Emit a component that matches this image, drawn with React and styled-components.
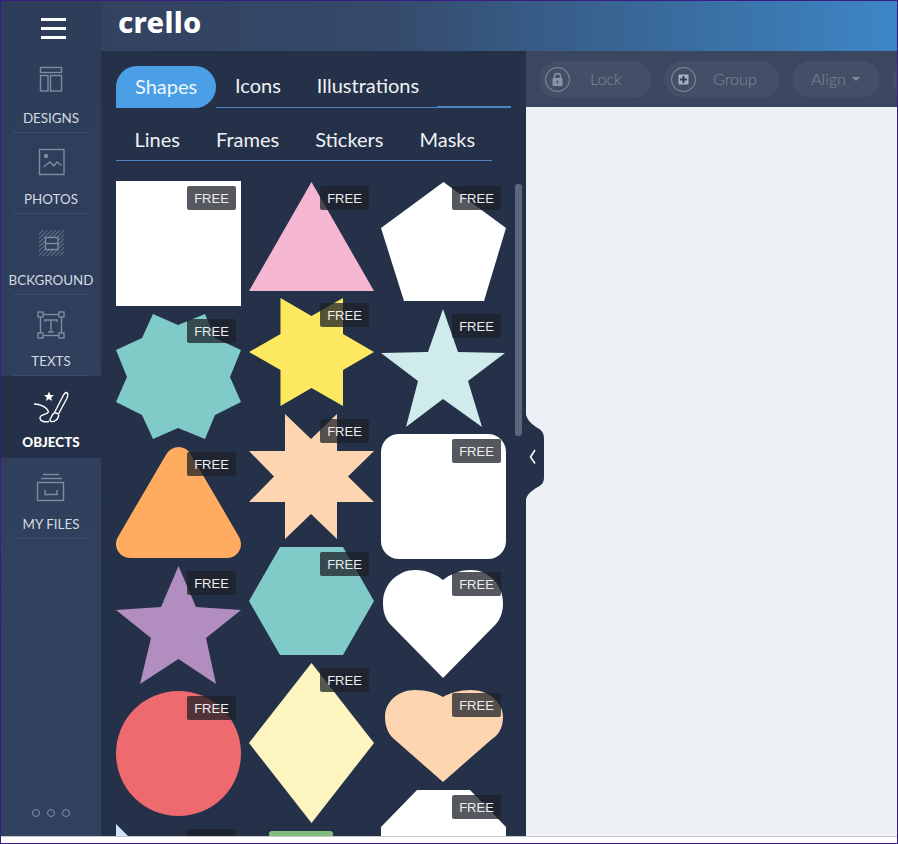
import React from "react";
import styled, { createGlobalStyle } from "styled-components";

const Global = createGlobalStyle`
  html, body { margin: 0; padding: 0; background: #fff; }
  body { font-family: "Lato", "Open Sans", sans-serif; }
`;

const Frame = styled.div`
  width: 898px; height: 844px; box-sizing: border-box; overflow: hidden;
  background: #fff;
  border: 1px solid #3a1c84;
  display: flex; flex-direction: column;
`;
const Main = styled.div`
  flex: none; height: 835px; display: flex;
  border-bottom: 1px solid #c6c8cc; box-sizing: content-box; overflow: hidden;
`;
const Sidebar = styled.nav`
  flex: none; width: 100px; display: flex; flex-direction: column;
  background: linear-gradient(180deg, #2e3d59 0%, #31425f 100%);
`;
const MenuButton = styled.div`
  flex: none; height: 51px; box-sizing: border-box; padding-top: 17px;
  display: flex; flex-direction: column; align-items: center; gap: 6.5px;
`;
const MenuBar = styled.span`
  display: block; width: 25px; height: 2.5px; background: #fff; margin-left: 5px;
`;
const Item = styled.div`
  flex: none; height: ${p => (p.$active ? 82 : 81)}px; box-sizing: border-box; padding: 0 12px;
  background: ${p => (p.$active ? "#253149" : "transparent")};
`;
const ItemInner = styled.div`
  height: 100%; box-sizing: border-box; padding-top: 14px;
  display: flex; flex-direction: column; align-items: center;
  border-bottom: 1px solid ${p => (p.$active ? "transparent" : "#3e4d69")};
`;
const ItemIcon = styled.svg`
  flex: none; width: 30px; height: 30px; overflow: visible;
  fill: none; stroke: ${p => (p.$active ? "#fff" : "#7f8b9f")}; stroke-width: 1.4;
`;
const ItemLabel = styled.span`
  margin-top: 12.5px; font-size: 13.4px; line-height: 18px; white-space: nowrap;
  color: ${p => (p.$active ? "#fff" : "#d5dae2")};
  font-weight: ${p => (p.$active ? 900 : 400)};
`;
const More = styled.div`
  margin-top: auto; padding-bottom: 19px; display: flex; justify-content: center; gap: 7px;
`;
const Dot = styled.span`
  width: 8px; height: 8px; box-sizing: border-box; border-radius: 50%; border: 1px solid #8490a3;
`;
const Content = styled.div`
  flex: 1; min-width: 0; display: flex; flex-direction: column;
`;
const Header = styled.header`
  flex: none; height: 50px; display: flex; align-items: center; padding-left: 17px;
  background: linear-gradient(90deg, #33425f 0%, #35496a 35%, #3d86c6 100%);
`;
const Logo = styled.div`
  color: #fff; font-family: "Noto Sans", sans-serif; font-weight: 800; font-size: 29px;
  line-height: 42px; letter-spacing: 0.3px; margin-top: -8px;
`;
const Body = styled.div`
  flex: 1; min-height: 0; display: flex;
`;
const Panel = styled.section`
  position: relative; flex: none; width: 425px; background: #253149; padding: 15px 0 0 15px;
  box-sizing: border-box; z-index: 1;
`;
const TabRow = styled.div`
  display: flex; width: 376px; height: 53px; box-sizing: border-box; padding: 9px 0 0 0.5px;
  align-items: center; border-bottom: 1px solid #4c84c4;
`;
const TabLineRow = styled.div`
  display: flex; height: 42px; width: 395px;
`;
const ActiveTab = styled.div`
  flex: none; width: 100px; height: 42px; box-sizing: border-box; padding: 0 0 3px 19px;
  display: flex; align-items: center; background: #4a9fe6; color: #eef6fd;
  font-size: 20px; border-radius: 21px 21px 21px 0;
`;
const TabRest = styled.div`
  flex: 1; display: flex; height: 42px; box-sizing: border-box; align-items: center;
  padding: 0 0 3px 1px; border-bottom: 1px solid #4c84c4; position: relative;
`;
const Thick = styled.span`
  position: absolute; right: 0; bottom: -1px; width: 74px; height: 2px; background: #4c84c4;
`;
const Tab = styled.div`
  flex: none; padding: 0 18px; font-size: 20px; color: #eef1f5; white-space: nowrap;
`;
const Gallery = styled.div`
  margin-top: 20px; display: grid; grid-template-columns: 133px 132px 125px;
  align-items: start; height: 655px; overflow: hidden;
`;
const Column = styled.div`
  display: flex; flex-direction: column; gap: 8px;
`;
const Tile = styled.div`
  position: relative; flex: none; width: 125px; height: ${p => p.$h}px;
`;
const ShapeSvg = styled.svg`
  display: block; width: 125px; overflow: visible;
`;
const Badge = styled.span`
  position: absolute; top: 5px; right: 5px; width: 49px; height: 24px; border-radius: 2px;
  display: flex; align-items: center; justify-content: center;
  background: rgba(28, 32, 40, 0.75); color: #ececec;
  font: 13px/1 "Liberation Sans", Arial, sans-serif;
`;
const Scrollbar = styled.div`
  position: absolute; left: 414px; top: 133px; width: 7px; height: 252px; border-radius: 3px;
  background: #5a667c;
`;
const Handle = styled.svg`
  position: absolute; left: 100%; top: 364px; width: 20px; height: 84px; overflow: visible;
`;
const Workspace = styled.div`
  flex: 1; min-width: 0; display: flex; flex-direction: column; background: #edf0f5;
`;
const Toolbar = styled.div`
  flex: none; height: 56px; box-sizing: border-box; padding: 10px 0 0 13px; background: #3a475f;
  display: flex; gap: 12px; overflow: hidden;
`;
const Pill = styled.div`
  flex: none; width: ${p => p.$w}px; height: 37px; box-sizing: border-box; border-radius: 19px;
  background: #424f67; display: flex; align-items: center;
  padding: 0 0 2px ${p => p.$pl}px; gap: ${p => p.$gap}px;
  color: #7f8a9c; font-size: 16.2px; font-weight: 300;
`;
const RoundIcon = styled.svg`
  flex: none; width: 25px; height: 25px; fill: none; margin-top: 2px;
`;
const Caret = styled.span`
  width: 0; height: 0; border-left: 4px solid transparent; border-right: 4px solid transparent;
  border-top: 4px solid #7f8a9c;
`;

const CYAN_STAR = "62,0 77,43 124,44 87,72 101,118 62,90 25,118 37,72 0,44 47,43";
const PURPLE_STAR = "62.5,0 80,41 125,44 90,72 100,118 62.5,93 24,118 35,72 0,44 45,41";

const shapes = [
  [
    { h: 125, el: <rect width="125" height="125" fill="#fff" /> },
    { h: 125, el: <polygon fill="#80cbc8" points="37,0 62,11 89,0 99,24 125,36 114,63 125,88 99,101 89,125 62,114 37,125 26,101 0,88 11,63 0,36 26,24" /> },
    { h: 111, el: <polygon fill="#ffab60" stroke="#ffab60" strokeWidth="28" strokeLinejoin="round" points="62.5,14 14,97 111,97" /> },
    { h: 117, el: <polygon fill="#b28dbf" points={PURPLE_STAR} /> },
    { h: 125, el: <circle cx="62.5" cy="62.5" r="62.5" fill="#ef6a6e" /> },
    { h: 100, empty: true, el: <polygon fill="#cde5f7" points="0,0 100,100 0,100" /> },
  ],
  [
    { h: 109, el: <polygon fill="#f4b6d0" points="62.5,1 125,110 0,110" /> },
    { h: 108, el: <polygon fill="#fde95f" points="31.5,0 62.5,18 94,0 94,36 125,54 94,72 94,108 62.5,90 31.5,108 31.5,72 0,54 31.5,36" /> },
    { h: 125, el: <polygon fill="#fdd5b1" points="36,0 62,25 88,0 88,37 125,37 99,62.5 125,88 88,88 88,125 62,100 36,125 36,88 0,88 25,62.5 0,37 36,37" /> },
    { h: 108, el: <polygon fill="#80cbc8" points="31,0 94,0 125,54 94,108 31,108 0,54" /> },
    { h: 160, el: <polygon fill="#fdf5c0" points="62.5,0 125,80 62.5,160 0,80" /> },
    { h: 100, empty: true, el: <rect x="20" width="64" height="40" rx="3" fill="#82bd80" /> },
  ],
  [
    { h: 120, el: <polygon fill="#fff" points="62.5,1 125,47 103,120 23,120 0,47" /> },
    { h: 117, el: <polygon fill="#d0ebec" points={CYAN_STAR} /> },
    { h: 125, el: <rect width="125" height="125" rx="18" fill="#fff" /> },
    { h: 113, el: <path fill="#fff" d="M62 111 L10 58 C4 52 2 44 2 36 C2 16 18 3 34 3 C46 3 56 8 62 13 C68 8 78 3 90 3 C106 3 122 16 122 36 C122 44 120 52 114 58 Z" /> },
    { h: 94, el: <path fill="#fdd5b1" d="M62 94 L13 51 C7 46 4 38 4 29 C4 13 18 2 34 2 C46 2 55 5 62 9 C69 5 78 2 90 2 C106 2 122 13 122 29 C122 38 119 46 111 51 Z" /> },
    { h: 100, el: <polygon fill="#fff" points="36,0 89,0 125,37 125,100 0,100 0,37" /> },
  ],
];

const DesignsIcon = () => (
  <ItemIcon viewBox="0 0 30 30">
    <rect x="4.5" y="1.5" width="21" height="5" />
    <rect x="4.5" y="9.5" width="7.5" height="15.5" />
    <rect x="14.5" y="9.5" width="11" height="15.5" />
  </ItemIcon>
);
const PhotosIcon = () => (
  <ItemIcon viewBox="0 0 30 30">
    <rect x="3.5" y="2.5" width="24.5" height="25" />
    <circle cx="10" cy="9" r="2.2" fill="#7f8b9f" stroke="none" />
    <polyline points="7.5,20 14,15 18,19 21,15 25.5,18.5" />
  </ItemIcon>
);
const BackgroundIcon = () => (
  <ItemIcon viewBox="0 0 30 30">
    <defs>
      <pattern id="hatch" width="3" height="3" patternUnits="userSpaceOnUse" patternTransform="rotate(45)">
        <line x1="0" y1="0" x2="0" y2="3" stroke="#7f8b9f" strokeWidth="1.3" />
      </pattern>
    </defs>
    <rect x="3" y="2" width="25" height="26" fill="url(#hatch)" stroke="none" />
    <rect x="9.5" y="9.5" width="12.5" height="12" fill="#2f3f5c" />
    <line x1="9.5" y1="15.5" x2="22" y2="15.5" />
  </ItemIcon>
);
const TextsIcon = () => (
  <ItemIcon viewBox="0 0 30 30">
    <rect x="4.5" y="5.5" width="21" height="21" />
    <rect x="2" y="3" width="5" height="5" fill="#2f3f5c" />
    <rect x="23" y="3" width="5" height="5" fill="#2f3f5c" />
    <rect x="2" y="24" width="5" height="5" fill="#2f3f5c" />
    <rect x="23" y="24" width="5" height="5" fill="#2f3f5c" />
    <path d="M9 13 V11 H21 V13 M15 11 V23 M12 23 H18" />
  </ItemIcon>
);
const ObjectsIcon = () => (
  <ItemIcon viewBox="0 0 30 30" $active>
    <polygon fill="#fff" stroke="none" points="13,1.5 14.4,4.9 18,5 15.2,7.4 16.1,11 13,9 9.9,11 10.8,7.4 8,5 11.6,4.9" />
    <path d="M30.5 2.5 C32.5 3.5 32 6 30.5 9 L22.5 24 L18.5 22.5 L27 6 C28 4 29 2.5 30.5 2.5 Z" />
    <path d="M18.5 23 C15.5 24 16 27 14 29.5 C13 31.5 17 32.5 19.5 30.5 C22.5 28.5 23 25.5 22.5 24.5" />
    <path d="M-2 14 C4 14 11 17 12.5 22 C11 25 4 24 4 28 C4 31 8 32.5 13 31.5" />
  </ItemIcon>
);
const FilesIcon = () => (
  <ItemIcon viewBox="0 0 30 30">
    <line x1="7" y1="2.5" x2="23" y2="2.5" />
    <line x1="5" y1="6.5" x2="26" y2="6.5" />
    <rect x="1.5" y="10.5" width="26" height="18" />
    <path d="M9 18 V22.5 H21 V18" />
  </ItemIcon>
);

const nav = [
  ["DESIGNS", DesignsIcon],
  ["PHOTOS", PhotosIcon],
  ["BCKGROUND", BackgroundIcon],
  ["TEXTS", TextsIcon],
  ["OBJECTS", ObjectsIcon, true],
  ["MY FILES", FilesIcon],
];

export default function App() {
  return (
    <>
      <Global />
      <Frame>
        <Main>
          <Sidebar>
            <MenuButton>
              <MenuBar />
              <MenuBar />
              <MenuBar />
            </MenuButton>
            {nav.map(([label, Icon, active]) => (
              <Item key={label} $active={active}>
                <ItemInner $active={active}>
                  <Icon />
                  <ItemLabel $active={active}>{label}</ItemLabel>
                </ItemInner>
              </Item>
            ))}
            <More>
              <Dot />
              <Dot />
              <Dot />
            </More>
          </Sidebar>
          <Content>
            <Header>
              <Logo>crello</Logo>
            </Header>
            <Body>
              <Panel>
                <TabLineRow>
                  <ActiveTab>Shapes</ActiveTab>
                  <TabRest>
                    <Tab>Icons</Tab>
                    <Tab>Illustrations</Tab>
                    <Thick />
                  </TabRest>
                </TabLineRow>
                <TabRow>
                  <Tab>Lines</Tab>
                  <Tab>Frames</Tab>
                  <Tab>Stickers</Tab>
                  <Tab>Masks</Tab>
                </TabRow>
                <Gallery>
                  {shapes.map((col, i) => (
                    <Column key={i}>
                      {col.map((s, j) => (
                        <Tile key={j} $h={s.h}>
                          <ShapeSvg viewBox={`0 0 125 ${s.h}`} height={s.h}>{s.el}</ShapeSvg>
                          <Badge>{s.empty ? null : "FREE"}</Badge>
                        </Tile>
                      ))}
                    </Column>
                  ))}
                </Gallery>
                <Scrollbar />
                <Handle viewBox="0 0 20 84">
                  <path fill="#253149" d="M0 0 C2 6 6 9 10 12 C16 15 18 18 18 24 V62 C18 68 16 70 10 73 C6 76 2 78 0 84 Z" />
                  <polyline points="9,35 4.5,42 9,48.5" fill="none" stroke="#fff" strokeWidth="1.5" />
                </Handle>
              </Panel>
              <Workspace>
                <Toolbar>
                  <Pill $w={113} $pl={6} $gap={20}>
                    <RoundIcon viewBox="0 0 25 25">
                      <circle cx="12.5" cy="12.5" r="12" stroke="#8a94a5" />
                      <rect x="7.5" y="11" width="10" height="8" rx="1" fill="#8a94a5" />
                      <path d="M9.5 11 V9 C9.5 5.5 15.5 5.5 15.5 9 V11" stroke="#8a94a5" strokeWidth="1.5" />
                      <rect x="11.7" y="13.5" width="1.6" height="3" fill="#424f67" />
                    </RoundIcon>
                    Lock
                  </Pill>
                  <Pill $w={116} $pl={7} $gap={17}>
                    <RoundIcon viewBox="0 0 25 25">
                      <circle cx="12.5" cy="12.5" r="12" stroke="#8a94a5" />
                      <rect x="7.5" y="7.5" width="10" height="10" rx="1" fill="#a8b0bc" />
                      <path d="M12.5 9 V16 M9 12.5 H16" stroke="#2f3b50" strokeWidth="2" />
                    </RoundIcon>
                    Group
                  </Pill>
                  <Pill $w={88} $pl={19} $gap={6}>
                    Align
                    <Caret />
                  </Pill>
                  <Pill $w={60} $pl={19} $gap={6} />
                </Toolbar>
              </Workspace>
            </Body>
          </Content>
        </Main>
      </Frame>
    </>
  );
}
